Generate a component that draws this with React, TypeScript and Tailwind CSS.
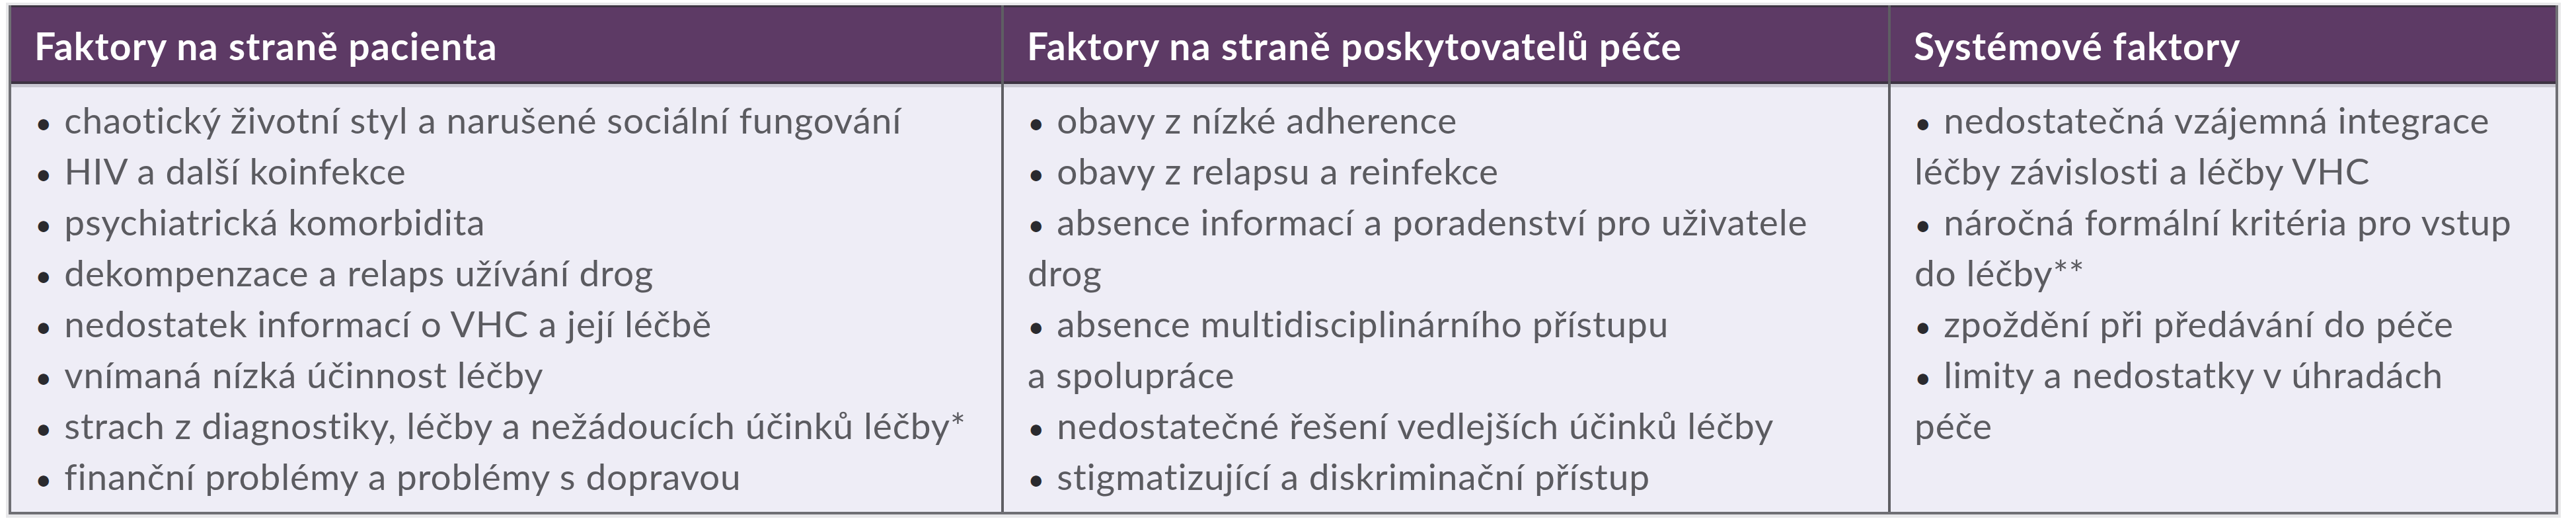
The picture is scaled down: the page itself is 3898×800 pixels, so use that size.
const columns = [
  {
    title: 'Faktory na straně pacienta',
    width: 'w-[1502px] border-r-4',
    items: [
      ['chaotický životní styl a narušené sociální fungování'],
      ['HIV a další koinfekce'],
      ['psychiatrická komorbidita'],
      ['dekompenzace a relaps užívání drog'],
      ['nedostatek informací o VHC a její léčbě'],
      ['vnímaná nízká účinnost léčby'],
      ['strach z diagnostiky, léčby a nežádoucích účinků léčby*'],
      ['finanční problémy a problémy s dopravou'],
    ],
  },
  {
    title: 'Faktory na straně poskytovatelů péče',
    width: 'w-[1342px] border-r-4',
    items: [
      ['obavy z nízké adherence'],
      ['obavy z relapsu a reinfekce'],
      ['absence informací a poradenství pro uživatele', 'drog'],
      ['absence multidisciplinárního přístupu', 'a spolupráce'],
      ['nedostatečné řešení vedlejších účinků léčby'],
      ['stigmatizující a diskriminační přístup'],
    ],
  },
  {
    title: 'Systémové faktory',
    width: 'w-[1006px]',
    items: [
      ['nedostatečná vzájemná integrace', 'léčby závislosti a léčby VHC'],
      ['náročná formální kritéria pro vstup', 'do léčby**'],
      ['zpoždění při předávání do péče'],
      ['limity a nedostatky v úhradách', 'péče'],
    ],
  },
]

export default function App() {
  return (
    <div className="min-h-[800px] bg-white pt-[4px] pl-[9px] font-['Lato','Liberation_Sans',sans-serif]">
      <div className="w-fit border-4 border-[#e8e8ea] border-b-[5px]">
        <div className="flex border-x-4 border-b-4 border-[#6f6f74] bg-[#eeedf6]">
          {columns.map((col) => (
            <div key={col.title} className={`${col.width} border-[#5e5e63] flex flex-col`}>
              <div className="h-[119px] border-t-[3px] border-b-4 border-[#3d3342] bg-[#5d3a65] pl-[35px] pt-[30px] text-[57px] font-bold leading-none tracking-[0.022em] text-white">
                {col.title}
              </div>
              <div className="min-h-[647px] border-t-[5px] border-[#c9c8d2] pl-[36px] pt-[11px] pb-[10px] text-[55px] leading-[77px] tracking-[0.015em] text-[#5b5b60]">
                {col.items.map((lines, i) => (
                  <div key={i}>
                    {lines.map((line, j) => (
                      <div key={j} className="whitespace-nowrap">
                        {j === 0 && <span className="mr-[18px] text-[44px] leading-none text-[#2a2a2e]">•</span>}
                        {line}
                      </div>
                    ))}
                  </div>
                ))}
              </div>
            </div>
          ))}
        </div>
      </div>
    </div>
  )
}
